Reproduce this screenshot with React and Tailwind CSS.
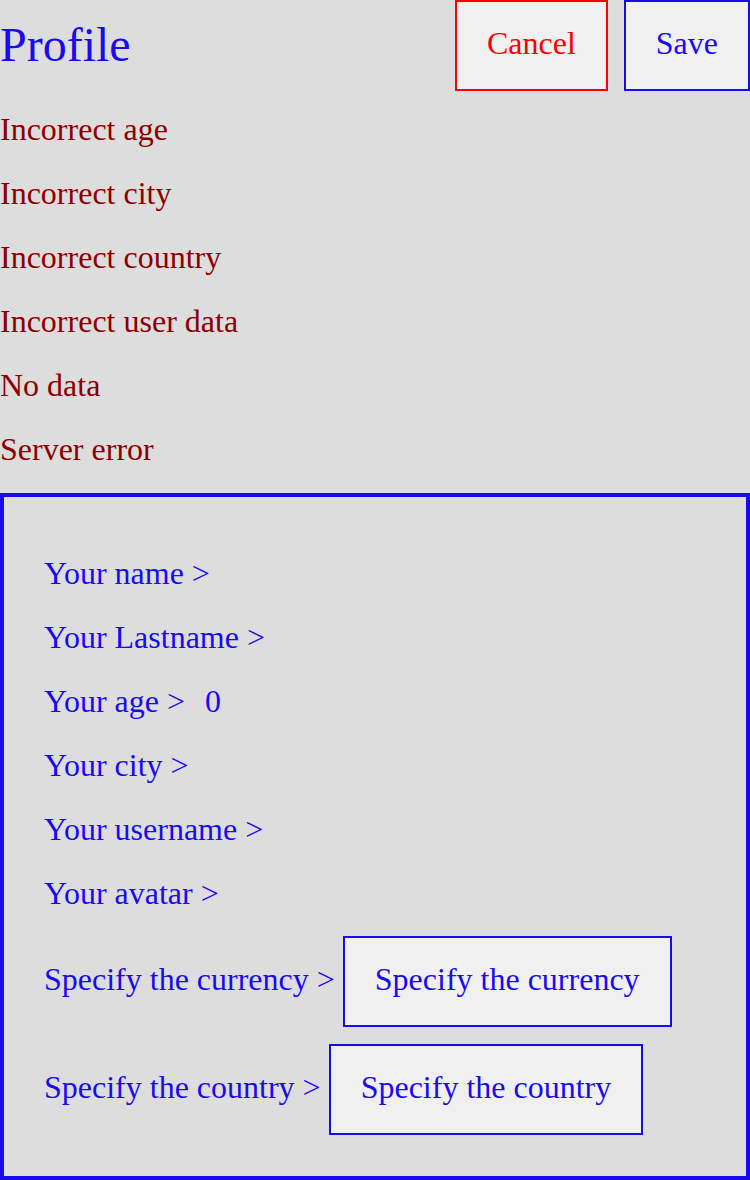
const errors = [
  "Incorrect age",
  "Incorrect city",
  "Incorrect country",
  "Incorrect user data",
  "No data",
  "Server error",
];

const Row = ({ children }) => (
  <div className="h-16 flex items-center whitespace-pre">{children}</div>
);

const App = () => {
  return (
    <div
      className="min-h-[1180px] bg-[#dddddd] text-[32px] leading-[normal]"
      style={{ fontFamily: '"Liberation Serif", "Times New Roman", serif' }}
    >
      {/* Header */}
      <div className="flex justify-between items-center h-[91px]">
        <h1 className="text-[48px] text-[#1a0aee] leading-[normal] mb-[3px]">Profile</h1>
        <div className="flex gap-[16px] h-full">
          <button className="h-full px-[30px] pb-[4px] bg-[#f0f0f0] border-2 border-[#ff0000] text-[#ff0000]">
            Cancel
          </button>
          <button className="h-full px-[30px] pb-[4px] bg-[#f0f0f0] border-2 border-[#1a0aee] text-[#1a0aee]">
            Save
          </button>
        </div>
      </div>

      {/* Errors */}
      <div className="mt-[6px] flex flex-col text-[#8b0000]">
        {errors.map((e) => (
          <Row key={e}>{e}</Row>
        ))}
      </div>

      {/* Form */}
      <div className="mt-[12px] border-4 border-[#1a0aee] pt-[44px] pb-[41px] px-10 text-[#1a0aee]">
        <Row>Your name &gt;</Row>
        <Row>Your Lastname &gt;</Row>
        <Row>
          Your age &gt;<span className="ml-5">0</span>
        </Row>
        <Row>Your city &gt;</Row>
        <Row>Your username &gt;</Row>
        <Row>Your avatar &gt;</Row>

        <div className="mt-[11px] flex items-center whitespace-pre">
          <span className="mb-[5px]">Specify the currency &gt; </span>
          <button className="h-[91px] px-[30px] pb-[5px] bg-[#f0f0f0] border-2 border-[#1a0aee]">
            Specify the currency
          </button>
        </div>
        <div className="mt-[17px] flex items-center whitespace-pre">
          <span className="mb-[5px]">Specify the country &gt; </span>
          <button className="h-[91px] px-[30px] pb-[5px] bg-[#f0f0f0] border-2 border-[#1a0aee]">
            Specify the country
          </button>
        </div>
      </div>
    </div>
  );
};

export default App;
